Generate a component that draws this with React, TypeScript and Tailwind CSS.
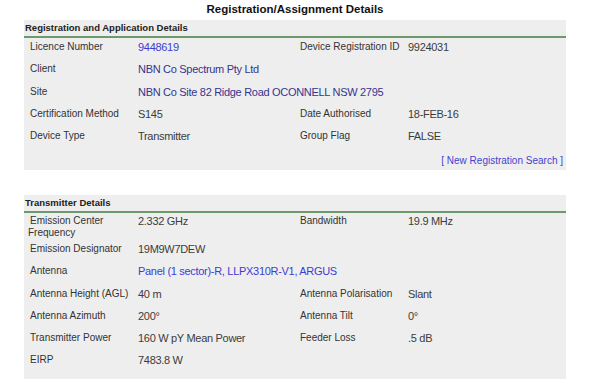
type Cell = { label: string; value: string; tone?: "link" | "navy" };

type Row = { left: Cell; right?: Cell; tall?: boolean };

const registration: Row[] = [
  {
    left: { label: "Licence Number", value: "9448619", tone: "link" },
    right: { label: "Device Registration ID", value: "9924031" },
  },
  { left: { label: "Client", value: "NBN Co Spectrum Pty Ltd", tone: "navy" } },
  { left: { label: "Site", value: "NBN Co Site 82 Ridge Road OCONNELL NSW 2795", tone: "navy" } },
  {
    left: { label: "Certification Method", value: "S145" },
    right: { label: "Date Authorised", value: "18-FEB-16" },
  },
  {
    left: { label: "Device Type", value: "Transmitter" },
    right: { label: "Group Flag", value: "FALSE" },
  },
];

const transmitter: Row[] = [
  {
    left: { label: "Emission Center Frequency", value: "2.332 GHz" },
    right: { label: "Bandwidth", value: "19.9 MHz" },
    tall: true,
  },
  { left: { label: "Emission Designator", value: "19M9W7DEW" } },
  { left: { label: "Antenna", value: "Panel (1 sector)-R, LLPX310R-V1, ARGUS", tone: "link" } },
  {
    left: { label: "Antenna Height (AGL)", value: "40 m" },
    right: { label: "Antenna Polarisation", value: "Slant" },
  },
  {
    left: { label: "Antenna Azimuth", value: "200°" },
    right: { label: "Antenna Tilt", value: "0°" },
  },
  {
    left: { label: "Transmitter Power", value: "160 W pY Mean Power" },
    right: { label: "Feeder Loss", value: ".5 dB" },
  },
  { left: { label: "EIRP", value: "7483.8 W" } },
];

const toneClass = (tone?: Cell["tone"]) =>
  tone === "link" ? "text-[#3c3cd2]" : tone === "navy" ? "text-[#35348f]" : "text-[#3c3c3c]";

const Label = ({ text, inset }: { text: string; inset?: boolean }) => (
  <div className={`text-[10px] leading-[12px] text-[#333] ${inset ? "pl-[4px] indent-[2px]" : "pl-[6px]"}`}>
    {text}
  </div>
);

const Value = ({ cell, wide }: { cell: Cell; wide?: boolean }) => (
  <div
    className={`whitespace-nowrap text-[11px] leading-[13px] tracking-[-0.3px] ${wide ? "col-span-3" : ""} ${toneClass(cell.tone)}`}
  >
    {cell.value}
  </div>
);

const Rows = ({ rows, inset }: { rows: Row[]; inset?: boolean }) => (
  <div className={inset ? "pt-[1px]" : "pt-[2px]"}>
    {rows.map((row) => (
      <div
        key={row.left.label}
        className={`grid grid-cols-[114px_162px_108px_1fr] items-start pt-[1px] ${row.tall ? "h-[28px]" : "h-[22.25px]"}`}
      >
        <Label text={row.left.label} inset={inset} />
        <Value cell={row.left} wide={!row.right} />
        {row.right && (
          <>
            <div className="whitespace-nowrap text-[10px] leading-[12px] text-[#333]">{row.right.label}</div>
            <Value cell={row.right} />
          </>
        )}
      </div>
    ))}
  </div>
);

const SectionHeader = ({ title }: { title: string }) => (
  <div className="h-[18px] border-b-2 border-[#6d9a6d] pl-[1px] pt-[2px] text-[9.5px] font-bold leading-[12px] text-[#222]">
    {title}
  </div>
);

export default function App() {
  return (
    <div className="h-[379px] w-[601px] overflow-hidden bg-white font-['Liberation_Sans',Arial,sans-serif]">
      <div className="ml-[24px] w-[542px]">
        <h1 className="h-[20px] pt-[2px] text-center text-[11.5px] font-bold leading-[14px] text-[#111]">
          Registration/Assignment Details
        </h1>

        <section className="h-[150px] bg-[#eeeeee]">
          <SectionHeader title="Registration and Application Details" />
          <Rows rows={registration} />
          <div className="flex justify-end pr-[3px] pt-[4px] text-[10px] leading-[12px] text-[#4343d0]">
            [ New Registration Search ]
          </div>
        </section>

        <section className="mt-[25px] h-[200px] bg-[#eeeeee]">
          <SectionHeader title="Transmitter Details" />
          <Rows rows={transmitter} inset />
          <div className="flex justify-end pt-[3px] pr-[2px]">
            <div className="h-[10px] w-[124px] rounded-t-[3px] border border-[#c8c8c8] bg-white" />
          </div>
        </section>
      </div>
    </div>
  );
}
